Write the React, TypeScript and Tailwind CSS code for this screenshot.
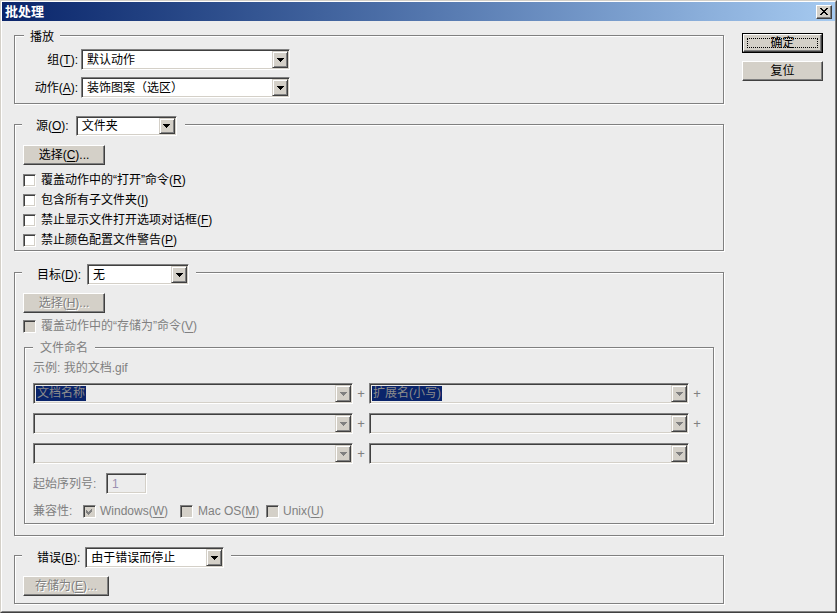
import React from "react";

const SUNKEN =
  "border border-t-[#808080] border-l-[#808080] border-r-white border-b-white shadow-[inset_1px_1px_0_#404040,inset_-1px_-1px_0_#d4d0c8]";
const RAISED =
  "bg-[#d4d0c8] border border-t-white border-l-white border-r-[#404040] border-b-[#404040] shadow-[inset_-1px_-1px_0_#808080]";
const DISABLED_TEXT = "text-[#808080] [text-shadow:1px_1px_0_#ffffff]";

function U({ c }: { c: string }) {
  return <span className="underline underline-offset-[2px] decoration-[1px]">{c}</span>;
}

function Tri({ disabled }: { disabled?: boolean }) {
  const fill = disabled ? "#808080" : "#000000";
  return (
    <svg width="7" height="4" viewBox="0 0 7 4" shapeRendering="crispEdges">
      <rect x="0" y="0" width="7" height="1" fill={fill} />
      <rect x="1" y="1" width="5" height="1" fill={fill} />
      <rect x="2" y="2" width="3" height="1" fill={fill} />
      <rect x="3" y="3" width="1" height="1" fill={fill} />
    </svg>
  );
}

function DropBtn({ disabled }: { disabled?: boolean }) {
  return (
    <div
      className={`w-[16px] h-full shrink-0 flex items-center justify-center bg-[#d4d0c8] border border-t-[#d4d0c8] border-l-[#d4d0c8] border-r-[#404040] border-b-[#404040] shadow-[inset_1px_1px_0_#ffffff,inset_-1px_-1px_0_#808080]`}
    >
      <Tri disabled={disabled} />
    </div>
  );
}

function Select({
  className,
  text,
  disabled,
  highlight,
}: {
  className: string;
  text?: string;
  disabled?: boolean;
  highlight?: boolean;
}) {
  return (
    <div
      className={`flex p-[1px] shrink-0 ${SUNKEN} ${disabled ? "bg-[#ececec]" : "bg-white"} ${className}`}
    >
      <div className="flex-1 flex items-center min-w-0 overflow-hidden">
        {highlight ? (
          <span className="ml-[1px] bg-[#0a246a] text-[#8c8c8c] leading-[15px] px-[1px] whitespace-nowrap">
            {text}
          </span>
        ) : (
          <span className={`pl-[4px] whitespace-nowrap ${disabled ? "text-[#808080]" : ""}`}>{text}</span>
        )}
      </div>
      <DropBtn disabled={disabled} />
    </div>
  );
}

function Check({ checked, disabled }: { checked?: boolean; disabled?: boolean }) {
  return (
    <div
      className={`w-[13px] h-[13px] shrink-0 flex items-center justify-center ${SUNKEN} ${
        disabled ? "bg-[#d4d0c8]" : "bg-white"
      }`}
    >
      {checked && (
        <svg width="7" height="7" viewBox="0 0 7 7" shapeRendering="crispEdges">
          <path d="M0 2 L2 4 L6 0 L6 3 L2 7 L0 5 Z" fill={disabled ? "#808080" : "#000000"} />
        </svg>
      )}
    </div>
  );
}

function Btn({
  children,
  className,
  disabled,
  isDefault,
}: {
  children: React.ReactNode;
  className: string;
  disabled?: boolean;
  isDefault?: boolean;
}) {
  if (isDefault) {
    return (
      <div className={`border border-black ${className}`}>
        <div className={`relative h-full flex items-center justify-center ${RAISED}`}>
          <div className="absolute inset-[3px] border border-dotted border-black" />
          <span>{children}</span>
        </div>
      </div>
    );
  }
  return (
    <div className={`flex items-center justify-center ${RAISED} ${className}`}>
      <span className={disabled ? DISABLED_TEXT : ""}>{children}</span>
    </div>
  );
}

function Group({
  className,
  legend,
  legendClass,
  children,
}: {
  className: string;
  legend: React.ReactNode;
  legendClass: string;
  children: React.ReactNode;
}) {
  return (
    <div
      className={`relative border border-[#808080] shadow-[inset_1px_1px_0_#ffffff,1px_1px_0_#ffffff] ${className}`}
    >
      <div className={`absolute flex items-center bg-[#ececec] ${legendClass}`}>{legend}</div>
      {children}
    </div>
  );
}

function CheckRow({ label, checked, disabled }: { label: React.ReactNode; checked?: boolean; disabled?: boolean }) {
  return (
    <div className="h-[20px] flex items-center">
      <Check checked={checked} disabled={disabled} />
      <span className={`ml-[5px] whitespace-nowrap ${disabled ? "text-[#808080]" : ""}`}>{label}</span>
    </div>
  );
}

function Plus({ hidden }: { hidden?: boolean }) {
  return (
    <div className="w-[16px] flex items-center justify-center text-[#808080] text-[13px]">
      {hidden ? "" : "+"}
    </div>
  );
}

export default function App() {
  return (
    <div className="w-[837px] h-[613px] overflow-hidden border border-t-[#d4d0c8] border-l-[#d4d0c8] border-r-[#404040] border-b-[#404040] font-['Liberation_Sans','Noto_Sans_CJK_SC',sans-serif] text-[12px] leading-[16px] text-black">
      <div className="h-full flex flex-col border border-t-white border-l-white border-r-[#808080] border-b-[#808080] bg-[#ececec]">
        {/* Title bar */}
        <div className="h-[19px] shrink-0 flex items-center justify-between bg-linear-to-r from-[#0a246a] to-[#a6caf0]">
          <span className="pl-[3px] text-white font-bold text-[13px] leading-[16px]">批处理</span>
          <div className={`w-[16px] h-[14px] mr-[3px] flex items-center justify-center ${RAISED}`}>
            <svg width="8" height="7" viewBox="0 0 8 7" shapeRendering="crispEdges">
              <path
                d="M0 0h2v1h1v1h2V1h1V0h2v1H7v1H6v1H5v1h1v1h1v1h1v1H6V6H5V5H3v1H2v1H0V6h1V5h1V4h1V3H2V2H1V1H0z"
                fill="#000"
              />
            </svg>
          </div>
        </div>

        {/* Body */}
        <div className="flex pl-[12px]">
          <div className="w-[710px] mt-[14px] flex flex-col">
            {/* 播放 */}
            <Group
              className="h-[69px]"
              legendClass="left-[9px] -top-[7px] px-[6px]"
              legend={<span>播放</span>}
            >
              <div className="pt-[13px] flex flex-col gap-[7px]">
                <div className="flex items-center">
                  <span className="w-[63px] text-right whitespace-nowrap">
                    组(<U c="T" />):
                  </span>
                  <Select className="ml-[3px] w-[209px] h-[21px]" text="默认动作" />
                </div>
                <div className="flex items-center">
                  <span className="w-[63px] text-right whitespace-nowrap">
                    动作(<U c="A" />):
                  </span>
                  <Select className="ml-[3px] w-[209px] h-[21px]" text="装饰图案（选区）" />
                </div>
              </div>
            </Group>

            {/* 源 */}
            <Group
              className="h-[127px] mt-[20px]"
              legendClass="left-[7px] -top-[9px] pl-[14px] pr-[8px]"
              legend={
                <>
                  <span className="whitespace-nowrap">
                    源(<U c="O" />):
                  </span>
                  <Select className="ml-[7px] w-[101px] h-[20px]" text="文件夹" />
                </>
              }
            >
              <div className="pt-[20px] pl-[8px] flex flex-col">
                <Btn className="w-[82px] h-[20px]">
                  选择(<U c="C" />)...
                </Btn>
                <div className="mt-[5px] flex flex-col">
                  <CheckRow
                    label={
                      <>
                        覆盖动作中的“打开”命令(<U c="R" />)
                      </>
                    }
                  />
                  <CheckRow
                    label={
                      <>
                        包含所有子文件夹(<U c="I" />)
                      </>
                    }
                  />
                  <CheckRow
                    label={
                      <>
                        禁止显示文件打开选项对话框(<U c="F" />)
                      </>
                    }
                  />
                  <CheckRow
                    label={
                      <>
                        禁止颜色配置文件警告(<U c="P" />)
                      </>
                    }
                  />
                </div>
              </div>
            </Group>

            {/* 目标 */}
            <Group
              className="h-[264px] mt-[21px]"
              legendClass="left-[7px] -top-[9px] pl-[15px] pr-[7px]"
              legend={
                <>
                  <span className="whitespace-nowrap">
                    目标(<U c="D" />):
                  </span>
                  <Select className="ml-[6px] w-[102px] h-[21px]" text="无" />
                </>
              }
            >
              <div className="pt-[20px] pl-[8px] flex flex-col">
                <Btn className="w-[82px] h-[20px]" disabled>
                  选择(<U c="H" />)...
                </Btn>
                <div className="mt-[3px]">
                  <CheckRow
                    disabled
                    label={
                      <>
                        覆盖动作中的“存储为”命令(<U c="V" />)
                      </>
                    }
                  />
                </div>

                {/* 文件命名 */}
                <Group
                  className="mt-[11px] ml-[1px] w-[690px] h-[177px]"
                  legendClass="left-[8px] -top-[8px] px-[7px]"
                  legend={<span className="text-[#808080]">文件命名</span>}
                >
                  <div className="pt-[12px] pl-[8px] flex flex-col text-[#808080]">
                    <div className="h-[16px] flex items-center">示例: 我的文档.gif</div>
                    <div className="mt-[7px] flex flex-col gap-[9px]">
                      <div className="flex">
                        <Select className="w-[320px] h-[21px]" text="文档名称" disabled highlight />
                        <Plus />
                        <Select className="w-[320px] h-[21px]" text="扩展名(小写)" disabled highlight />
                        <Plus />
                      </div>
                      <div className="flex">
                        <Select className="w-[320px] h-[21px]" disabled />
                        <Plus />
                        <Select className="w-[320px] h-[21px]" disabled />
                        <Plus />
                      </div>
                      <div className="flex">
                        <Select className="w-[320px] h-[21px]" disabled />
                        <Plus />
                        <Select className="w-[320px] h-[21px]" disabled />
                        <Plus hidden />
                      </div>
                    </div>
                    <div className="mt-[9px] h-[21px] flex items-center">
                      <span className="w-[73px] whitespace-nowrap">起始序列号:</span>
                      <div className={`w-[41px] h-[21px] flex items-center bg-[#ececec] ${SUNKEN}`}>
                        <span className="pl-[5px] text-[#9a8fb0]">1</span>
                      </div>
                    </div>
                    <div className="mt-[7px] h-[20px] flex items-center">
                      <span className="w-[50px] whitespace-nowrap">兼容性:</span>
                      <div className="w-[97px] flex items-center">
                        <Check checked disabled />
                        <span className="ml-[4px] whitespace-nowrap">
                          Windows(<U c="W" />)
                        </span>
                      </div>
                      <div className="w-[86px] flex items-center">
                        <Check disabled />
                        <span className="ml-[5px] whitespace-nowrap">
                          Mac OS(<U c="M" />)
                        </span>
                      </div>
                      <div className="flex items-center">
                        <Check disabled />
                        <span className="ml-[4px] whitespace-nowrap">
                          Unix(<U c="U" />)
                        </span>
                      </div>
                    </div>
                  </div>
                </Group>
              </div>
            </Group>

            {/* 错误 */}
            <Group
              className="h-[49px] mt-[19px]"
              legendClass="left-[7px] -top-[9px] pl-[15px] pr-[7px]"
              legend={
                <>
                  <span className="whitespace-nowrap">
                    错误(<U c="B" />):
                  </span>
                  <Select className="ml-[5px] w-[139px] h-[21px]" text="由于错误而停止" />
                </>
              }
            >
              <div className="pt-[20px] pl-[8px] flex">
                <Btn className="w-[86px] h-[20px]" disabled>
                  存储为(<U c="E" />)...
                </Btn>
              </div>
            </Group>
          </div>

          {/* Right buttons */}
          <div className="ml-[18px] mt-[12px] flex flex-col gap-[8px]">
            <Btn className="w-[81px] h-[20px]" isDefault>
              确定
            </Btn>
            <Btn className="w-[81px] h-[20px]">复位</Btn>
          </div>
        </div>
      </div>
    </div>
  );
}
